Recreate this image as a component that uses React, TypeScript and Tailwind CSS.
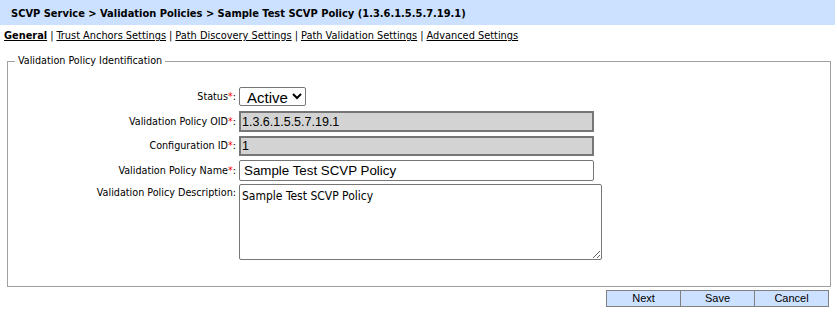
import React from 'react';

const labelFont = "font-['DejaVu_Sans_Condensed',sans-serif]";

const Req = () => <span className="text-[#ff0000]">*</span>;

// One form row: right-aligned label column + control
const Row = ({
  label,
  required,
  h,
  mb,
  top,
  children,
}: {
  label: string;
  required?: boolean;
  h: string;
  mb: string;
  top?: boolean;
  children: React.ReactNode;
}) => (
  <div className={`flex ${h} ${mb}`}>
    <div className={`w-[231px] flex justify-end pr-[3px] text-[10.7px] text-black ${top ? 'items-start pt-[1px]' : 'items-center'}`}>
      <span>
        {label}
        {required && <Req />}:
      </span>
    </div>
    {children}
  </div>
);

export default function App() {
  return (
    <div className={`w-[837px] h-[314px] bg-white ${labelFont}`}>
      {/* Breadcrumb title */}
      <div className="w-[835px] h-[25px] bg-[#cce0ff] flex items-center pl-[11px] pt-[3px] font-bold text-[11px] text-black">
        SCVP Service &gt; Validation Policies &gt; Sample Test SCVP Policy (1.3.6.1.5.5.7.19.1)
      </div>

      {/* Tabs */}
      <div className="h-[22px] flex items-center pl-[4px] pt-[1px] text-[10.9px] text-black">
        <a className="underline font-bold">General</a>
        <span className="px-[3px]">|</span>
        <a className="underline">Trust Anchors Settings</a>
        <span className="px-[3px]">|</span>
        <a className="underline">Path Discovery Settings</a>
        <span className="px-[3px]">|</span>
        <a className="underline">Path Validation Settings</a>
        <span className="px-[3px]">|</span>
        <a className="underline">Advanced Settings</a>
      </div>

      <fieldset className="mx-[7px] mt-[6px] w-[824px] h-[234px] border border-[#a0a0a0] px-0">
        <legend className="ml-[7px] px-[3px] text-[10.7px] text-black">Validation Policy Identification</legend>

        <div className="mt-[18px]">
          <Row label="Status" required h="h-[19px]" mb="mb-[5px]">
            <select
              defaultValue="Active"
              className="block w-[67px] h-[19px] border border-[#767676] rounded-[2px] bg-white font-['Liberation_Sans',sans-serif] text-[15px] pl-[3px] leading-none"
            >
              <option>Active</option>
              <option>Inactive</option>
            </select>
          </Row>

          <Row label="Validation Policy OID" required h="h-[21px]" mb="mb-[4px]">
            <input
              readOnly
              value="1.3.6.1.5.5.7.19.1"
              className="block w-[355px] h-[21px] border-2 border-[#767676] bg-[#d3d3d3] px-[1px] font-['Liberation_Sans',sans-serif] text-[12.5px] text-black"
            />
          </Row>

          <Row label="Configuration ID" required h="h-[20px]" mb="mb-[4px]">
            <input
              readOnly
              value="1"
              className="block w-[355px] h-[20px] border-2 border-[#767676] bg-[#d3d3d3] px-[1px] font-['Liberation_Sans',sans-serif] text-[12.5px] text-black"
            />
          </Row>

          <Row label="Validation Policy Name" required h="h-[21px]" mb="mb-[3px]">
            <input
              defaultValue="Sample Test SCVP Policy"
              className="block w-[355px] h-[21px] border border-[#767676] rounded-[2px] bg-white px-[4px] font-['Liberation_Sans',sans-serif] text-[13.33px] text-black"
            />
          </Row>

          <Row label="Validation Policy Description" top h="h-[76px]" mb="mb-0">
            <textarea
              defaultValue="Sample Test SCVP Policy"
              className="block w-[363px] h-[76px] border border-[#767676] rounded-[2px] bg-white px-[2px] py-[2px] text-[12px] text-black resize"
            />
          </Row>
        </div>
      </fieldset>

      {/* Action buttons */}
      <div className="flex justify-end pr-[8px] mt-[3px]">
        {['Next', 'Save', 'Cancel'].map((b) => (
          <button
            key={b}
            className="w-[75px] h-[17px] bg-[#cce0ff] border border-[#808080] -ml-[1px] font-['Liberation_Sans',sans-serif] text-[11px] text-black leading-none"
          >
            {b}
          </button>
        ))}
      </div>
    </div>
  );
}
